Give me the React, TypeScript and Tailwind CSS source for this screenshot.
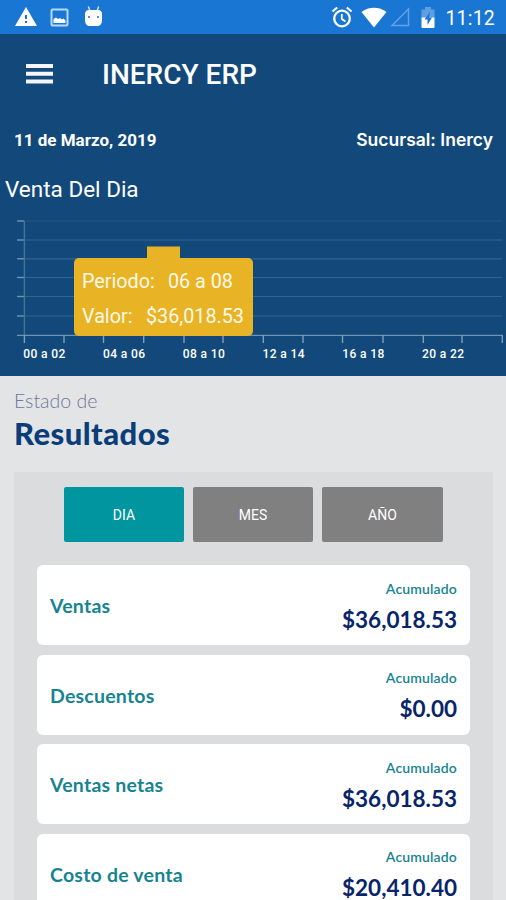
import { MdWarning } from 'react-icons/md';

interface ResultCardProps {
  label: string;
  amount: string;
}

const results: ResultCardProps[] = [
  { label: 'Ventas', amount: '$36,018.53' },
  { label: 'Descuentos', amount: '$0.00' },
  { label: 'Ventas netas', amount: '$36,018.53' },
  { label: 'Costo de venta', amount: '$20,410.40' },
];

const gridLines = [9, 28, 46.8, 65.5, 84.5, 104];
const ticks = [24.4, 64, 103.5, 143.7, 184, 223, 263.3, 303, 342.5, 383, 423.3, 462, 502.3];
const periods = ['00 a 02', '04 a 06', '08 a 10', '12 a 14', '16 a 18', '20 a 22'];

function StatusBar() {
  return (
    <div className="flex h-[34px] items-center justify-between bg-[#1976d2] pl-[14px] pr-[11px] text-white">
      <div className="flex items-center">
        <MdWarning className="h-[24px] w-[24px]" />
        <svg className="ml-[12px] h-[19px] w-[19px]" viewBox="0 0 19 19" fill="none">
          <rect x="1.5" y="1.5" width="16" height="16" rx="1" stroke="#b9d7fa" strokeWidth="2" />
          <path d="M3.500 15v-4l2.500-1.500 2 1.500 2-1 2 1.500 1.500-1 2 2V15z" fill="#fff" />
        </svg>
        <svg className="ml-[15px] mb-[2px] h-[21px] w-[19px]" viewBox="0 0 19 21" fill="none">
          <path d="M4.500 1l1.500 4M14.500 1L13 5" stroke="#d6e7fb" strokeWidth="1.400" strokeLinecap="round" />
          <path d="M1 8c0-2.500 1.500-4 4-4h9c2.500 0 4 1.500 4 4v6c0 4-2 6-5 6H6c-3 0-5-2-5-6z" fill="#fff" />
          <circle cx="5" cy="11" r="1" fill="#1976d2" />
          <circle cx="14" cy="11" r="1" fill="#1976d2" />
        </svg>
      </div>
      <div className="flex items-center">
        <svg className="h-[22px] w-[22px]" viewBox="0 0 22 22" fill="none" stroke="#fff">
          <circle cx="11" cy="12.500" r="7.800" strokeWidth="2.300" />
          <path d="M10.800 8v5l3.700 2.400" strokeWidth="1.800" />
          <path d="M1.500 5.500l4.700-4M20.500 5.500l-4.700-4" strokeWidth="2.100" />
        </svg>
        <svg className="ml-[8px] h-[21px] w-[26px]" viewBox="0 0 26 21">
          <path d="M.5 5C7.500-.7 18.500-.7 25.500 5L13 20.500z" fill="#fff" />
        </svg>
        <svg className="ml-[3px] h-[20px] w-[20px]" viewBox="0 0 20 20" fill="none">
          <path d="M18.500 2v16.500H2z" stroke="#659fe4" strokeWidth="1.500" />
        </svg>
        <svg className="ml-[11px] mt-[1px] h-[21px] w-[14px]" viewBox="0 0 14 21">
          <path d="M4 0h6v2.500h3.500V11H.5V2.500H4z" fill="#5d9de0" />
          <path d="M.5 10.500h13V20a1 1 0 0 1-1 1h-11a1 1 0 0 1-1-1z" fill="#fff" />
          <path d="M9 5L3.500 12.500h3V18l4.500-7.500H8z" fill="#1976d2" />
        </svg>
        <span className="ml-[10px] mt-[3px] font-['Roboto',sans-serif] text-[19.500px] leading-none tracking-[0.200px]">11:12</span>
      </div>
    </div>
  );
}

function SalesChart() {
  return (
    <div className="relative h-[164px]">
      <svg className="block h-[164px] w-[506px]" viewBox="0 0 506 164" fill="none">
        {gridLines.map((y) => (
          <g key={y}>
            <path d={`M24 ${y}H502`} stroke="#2f6690" strokeWidth="1.200" opacity={y === 9 ? 0.5 : 1} />
            <path d={`M17 ${y}h7`} stroke="#7194ae" strokeWidth="1.400" />
          </g>
        ))}
        <path d="M24.400 9v114" stroke="#40769b" strokeWidth="1.400" />
        <path d="M17 123.400H503" stroke="#6e93b0" strokeWidth="1.400" />
        {ticks.map((x) => (
          <path key={x} d={`M${x} 123v8`} stroke="#7f9fb9" strokeWidth="1.400" />
        ))}
        <rect x="147" y="34.500" width="33" height="20" fill="#e8b325" />
        {periods.map((period, i) => (
          <text
            key={period}
            x={44.3 + i * 79.750}
            y="145.500"
            textAnchor="middle"
            textLength="42"
            className="fill-white font-['Roboto',sans-serif] text-[12px] font-medium"
          >
            {period}
          </text>
        ))}
      </svg>

      {/* Selected bar */}
      <div className="absolute left-[74px] top-[46px] h-[78px] w-[179px] rounded-[5px] bg-[#e8b325] pl-[8px] pt-[6px] font-['Roboto',sans-serif] text-[19.750px] leading-[35px] text-[#fff9e8]">
        <div className="flex whitespace-nowrap">
          <span className="w-[86px]">Periodo:</span>
          <span>06 a 08</span>
        </div>
        <div className="flex whitespace-nowrap">
          <span className="w-[64px]">Valor:</span>
          <span>$36,018.53</span>
        </div>
      </div>
    </div>
  );
}

function ResultCard({ label, amount }: ResultCardProps) {
  return (
    <div className="flex h-[80px] shrink-0 items-center justify-between rounded-[6px] bg-white px-[13px]">
      <span className="pt-[2px] text-[19.500px] font-bold tracking-[0.220px] text-[#168490]">{label}</span>
      <div className="flex flex-col items-end pt-[3px]">
        <span className="text-[14px] font-semibold leading-[20px] tracking-[0.150px] text-[#168490]">Acumulado</span>
        <span className="mt-[6px] text-[22.500px] font-bold leading-[30px] text-[#08246b]">{amount}</span>
      </div>
    </div>
  );
}

export default function App() {
  return (
    <div className="h-[900px] w-[506px] overflow-hidden bg-[#e3e4e6] font-['Lato',sans-serif]">
      <StatusBar />

      <header className="h-[342px] bg-[#13497a] font-['Roboto',sans-serif] text-white">
        <div className="flex h-[80px] items-center pl-[26px]">
          <button className="mb-[1px] w-[27px]" aria-label="Menu">
            <svg className="block h-[20px] w-[27px]" viewBox="0 0 27 20" fill="#f4f4fc">
              <path d="M0 0h27v4H0zM0 7.700h27v4H0zM0 15.400h27v4H0z" />
            </svg>
          </button>
          <h1 className="ml-[49px] mt-[2px] text-[28px] font-medium leading-none">INERCY ERP</h1>
        </div>

        <div className="flex h-[50px] items-center justify-between pl-[14px] pr-[13px] pt-[3px]">
          <span className="text-[17px] font-bold">11 de Marzo, 2019</span>
          <span className="font-['Inter',sans-serif] text-[17.500px] font-semibold">Sucursal: Inercy</span>
        </div>

        <h2 className="flex h-[48px] items-center pl-[5px] pt-[3px] text-[22.500px]">Venta Del Dia</h2>

        <SalesChart />
      </header>

      <main className="px-[14px]">
        <div className="h-[96px] pt-[13px]">
          <p className="text-[19.500px] font-light leading-[24px] text-[#6f7899]">Estado de</p>
          <h2 className="text-[31px] font-black leading-[40px] tracking-[0.450px] text-[#0b3d78]">Resultados</h2>
        </div>

        <section className="h-[428px] w-[479px] bg-[#dadcdd] px-[23px] pt-[15px]">
          <div className="ml-[27px] flex gap-[9px] font-['Roboto',sans-serif] text-[14px] text-white">
            <button className="h-[55px] w-[120px] rounded-[2px] bg-[#00959f] pt-[2px]">DIA</button>
            <button className="h-[55px] w-[120px] rounded-[2px] bg-[#808080] pt-[2px]">MES</button>
            <button className="h-[55px] w-[121px] rounded-[2px] bg-[#808080] pt-[2px]">AÑO</button>
          </div>

          <div className="mt-[23px] flex flex-col gap-[9.500px]">
            {results.map((result) => (
              <ResultCard key={result.label} label={result.label} amount={result.amount} />
            ))}
          </div>
        </section>
      </main>
    </div>
  );
}
